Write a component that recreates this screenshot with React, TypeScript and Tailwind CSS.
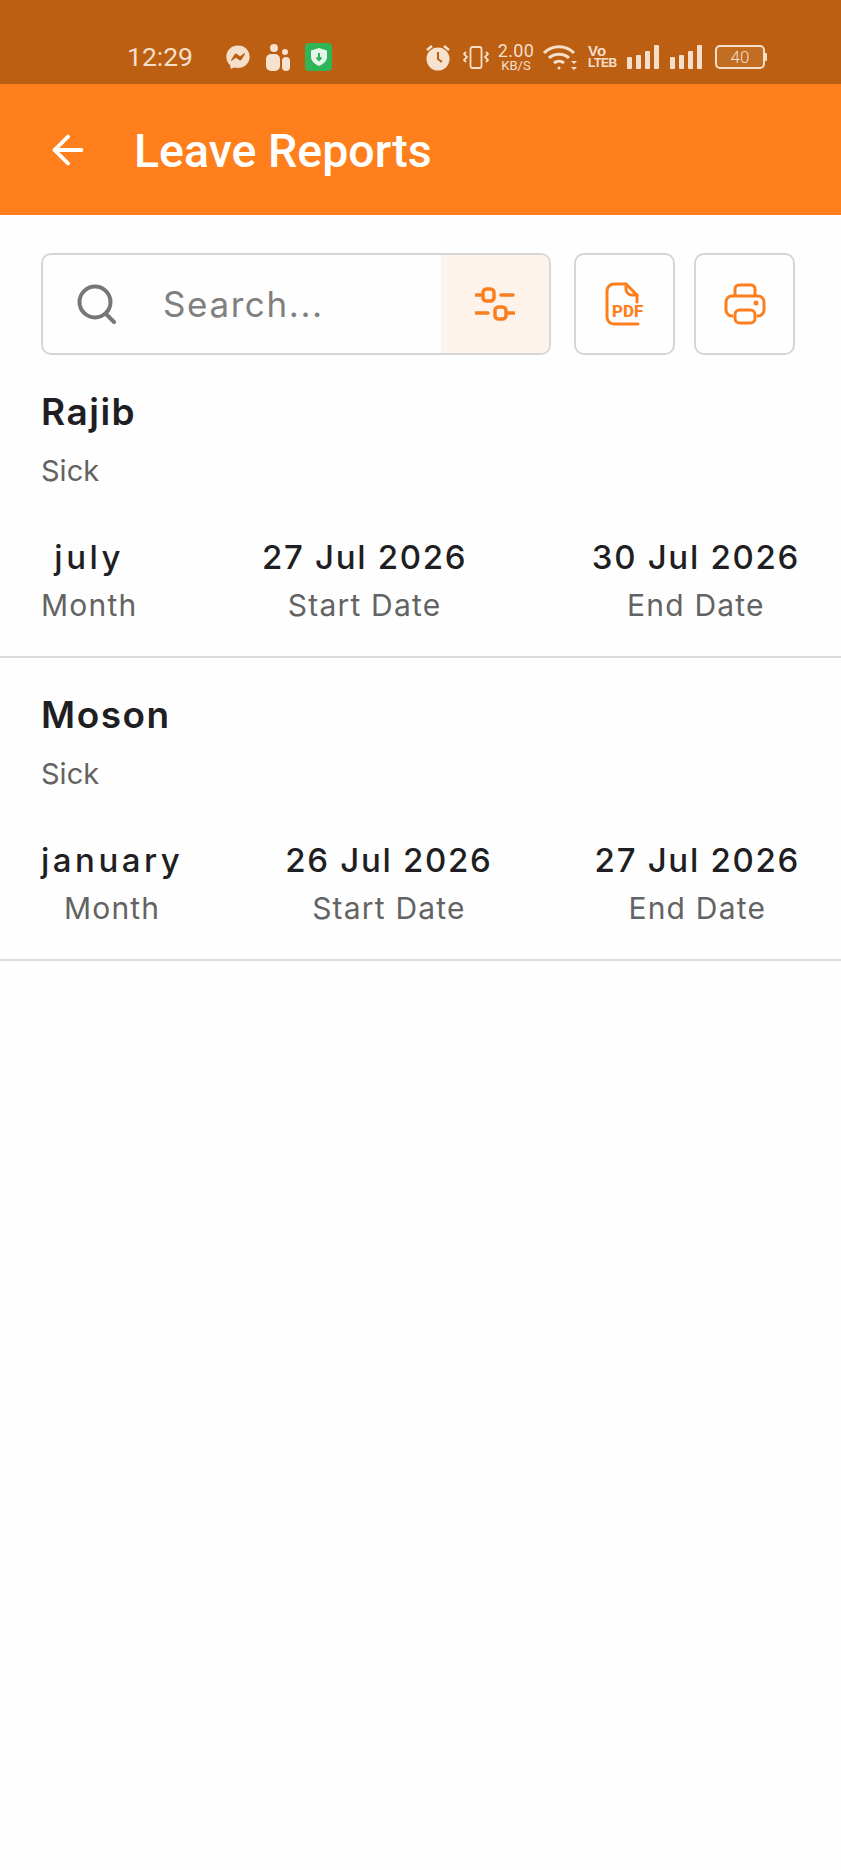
import { ArrowLeft } from "lucide-react";
import { FaFacebookMessenger } from "react-icons/fa";

const reports = [
  { name: "Rajib", type: "Sick", month: "july", start: "27 Jul 2026", end: "30 Jul 2026" },
  { name: "Moson", type: "Sick", month: "january", start: "26 Jul 2026", end: "27 Jul 2026" },
];

function Signal() {
  return (
    <div className="flex items-end gap-[4px] h-[24px]">
      <div className="w-[5px] h-[12px] bg-[#f5dfcb] rounded-[1px]" />
      <div className="w-[5px] h-[14px] bg-[#f5dfcb] rounded-[1px]" />
      <div className="w-[5px] h-[18px] bg-[#f5dfcb] rounded-[1px]" />
      <div className="w-[5px] h-[24px] bg-[#f5dfcb] rounded-[1px]" />
    </div>
  );
}

function StatusBar() {
  return (
    <div className="h-[84px] bg-[#bc5f12] flex items-center pt-[30px] pl-[127px] pr-[74px] text-[#f5dfcb] font-['Roboto',sans-serif]">
      <span className="text-[26.500px] leading-none w-[65px] pt-[1px]">12:29</span>
      <FaFacebookMessenger className="ml-[34px] w-[24px] h-[24px]" />
      {/* people icon */}
      <svg className="ml-[16px]" width="24" height="27" viewBox="0 0 24 27" fill="#f7e2d0">
        <circle cx="8" cy="4" r="4" />
        <circle cx="19" cy="8" r="3" />
        <rect x="0" y="10" width="14" height="17" rx="5" />
        <rect x="16" y="13" width="8" height="14" rx="4" />
      </svg>
      {/* green shield */}
      <div className="ml-[15px] w-[27px] h-[28px] bg-[#2fb457] rounded-[4px] flex items-center justify-center">
        <svg width="16" height="18" viewBox="0 0 16 18">
          <path d="M8 0l8 2.5v6.5c0 4-3.5 7-8 9-4.500-2-8-5-8-9V2.500z" fill="#e6f6ea" />
          <path d="M8 5v7M5.500 9.500L8 12l2.500-2.500" stroke="#2fb457" strokeWidth="2" fill="none" />
        </svg>
      </div>

      <div className="ml-auto flex items-center">
        {/* alarm */}
        <svg width="24" height="27" viewBox="0 0 24 27" fill="none">
          <circle cx="12" cy="15" r="11.500" fill="#f7e2d0" />
          <path d="M12 8v7l4 3" stroke="#bc5f12" strokeWidth="2" />
          <path d="M1 6l5-4M23 6l-5-4" stroke="#f7e2d0" strokeWidth="2.500" />
        </svg>
        {/* vibrate */}
        <svg className="ml-[13px]" width="26" height="23" viewBox="0 0 26 23" fill="none" stroke="#f5dfcb" strokeWidth="1.800">
          <rect x="7.500" y="1" width="11" height="21" rx="2" />
          <path d="M3 6l-2 2 3 3-3 3 2 2M23 6l2 2-3 3 3 3-2 2" />
        </svg>
        <div className="ml-[7px] w-[40px] flex flex-col items-center leading-none">
          <span className="text-[18px] leading-[15px] tracking-[0.3px]">2.00</span>
          <span className="text-[13px] leading-[11px] mt-[2px]">KB/S</span>
        </div>
        {/* wifi */}
        <svg className="ml-[7px]" width="34" height="26" viewBox="0 0 34 26" fill="none" stroke="#f5dfcb" strokeWidth="3">
          <path d="M1 9c8-8.500 22-8.500 30 0" />
          <path d="M6 14c5.500-5 14.500-5 20 0" />
          <path d="M11 19c3-2.500 7-2.500 10 0" />
          <circle cx="16" cy="24" r="1.500" fill="#f5dfcb" stroke="none" />
          <path d="M28 17l3 3 3-3zM28 23l3 3 3-3z" fill="#f5dfcb" stroke="none" />
        </svg>
        <div className="ml-[11px] w-[27px] flex flex-col items-start font-['Liberation_Sans',sans-serif] font-bold leading-none">
          <span className="text-[15px] leading-[12px]">Vo</span>
          <span className="text-[12px] leading-[11px] mt-[1px] tracking-[-0.4px]">LTEB</span>
        </div>
        <div className="ml-[12px]">
          <Signal />
        </div>
        <div className="ml-[11px]">
          <Signal />
        </div>
        <div className="ml-[13px] flex items-center">
          <div className="w-[50px] h-[24px] border-2 border-[#f5dfcb] rounded-[5px] flex items-center justify-center text-[17px] font-light leading-none bg-[#c9843f]/40">
            40
          </div>
          <div className="w-[2px] h-[8px] bg-[#f5dfcb] rounded-r-[1px]" />
        </div>
      </div>
    </div>
  );
}

function IconButton({ children }: { children: React.ReactNode }) {
  return (
    <div className="w-[101px] h-[102px] flex items-center justify-center border-2 border-[#d6d6d6] rounded-[10px]">
      {children}
    </div>
  );
}

function Stat({ value, label, wide }: { value: string; label: string; wide?: boolean }) {
  return (
    <div className="flex flex-col items-center">
      <span className={`text-[33px] leading-[48px] font-medium text-[#1f1f23] ${wide ? "tracking-[3.5px]" : "tracking-[1.7px]"}`}>
        {value}
      </span>
      <span className="text-[30px] leading-[48px] tracking-[1.2px] text-[#636363]">{label}</span>
    </div>
  );
}

export default function App() {
  return (
    <div className="min-h-[1870px] bg-[#fefefe] font-['Inter',sans-serif]">
      <StatusBar />
      <div className="h-[131px] bg-[#fe7f1b] flex items-center pl-[45px] text-white">
        <ArrowLeft className="w-[46px] h-[46px]" strokeWidth={2} />
        <span className="ml-[43px] pt-[4px] text-[46.500px] font-medium font-['Roboto',sans-serif] leading-none">Leave Reports</span>
      </div>

      <div className="flex items-center pt-[38px] pl-[41px]">
        <div className="w-[510px] h-[102px] flex border-2 border-[#d6d6d6] rounded-[10px] overflow-hidden">
          <div className="flex-1 flex items-center pl-[34px]">
            <svg width="40" height="40" viewBox="0 0 40 40" fill="none" stroke="#777777" strokeWidth="4" strokeLinecap="round">
              <circle cx="18" cy="18" r="15.500" />
              <path d="M29 30l8 8" />
            </svg>
            <span className="ml-[46px] text-[35px] tracking-[1.6px] text-[#808080] leading-none">Search...</span>
          </div>
          <div className="w-[108px] bg-[#fdf3ea] flex items-center justify-center">
            <svg width="40" height="36" viewBox="0 0 40 36" fill="none" stroke="#fd7e1c" strokeWidth="3.500" strokeLinecap="round">
              <path d="M1 9h6M26 9h12M1 27h12M32 27h7" />
              <rect x="8" y="3" width="11" height="12" rx="3.500" />
              <rect x="20" y="21" width="11" height="12" rx="3.500" />
            </svg>
          </div>
        </div>
        <div className="ml-[23px]">
          <IconButton>
            <svg width="40" height="44" viewBox="0 0 40 44" fill="none" stroke="#fd7e1c" strokeWidth="3" strokeLinecap="round" strokeLinejoin="round">
              <path d="M32 20v-7L21 2H9a7 7 0 0 0-7 7v26a7 7 0 0 0 7 7h24" />
              <path d="M21 2v5a6 6 0 0 0 6 6h5" />
              <text x="7" y="35" fontSize="17" fontWeight="800" fill="#fd7e1c" stroke="none" fontFamily="Roboto, sans-serif">PDF</text>
            </svg>
          </IconButton>
        </div>
        <div className="ml-[19px]">
          <IconButton>
            <svg width="42" height="42" viewBox="0 0 42 42" fill="none" stroke="#fd7e1c" strokeWidth="3" strokeLinejoin="round">
              <path d="M11 13V6a4 4 0 0 1 4-4h12a4 4 0 0 1 4 4v7" />
              <path d="M9 33H8a6 6 0 0 1-6-6v-8a6 6 0 0 1 6-6h26a6 6 0 0 1 6 6v8a6 6 0 0 1-6 6h-1" />
              <rect x="11" y="27" width="20" height="13" rx="4.500" />
              <circle cx="32" cy="20" r="1" fill="#fd7e1c" />
            </svg>
          </IconButton>
        </div>
      </div>

      {reports.map((r) => (
        <div key={r.name} className="border-b-2 border-[#dcdcdc] pl-[41px] pr-[41px] pt-[30px] pb-[27px] first:pt-[26px]">
          <div className="text-[37px] leading-[54px] font-semibold tracking-[1.5px] text-[#1f1f23]">{r.name}</div>
          <div className="text-[29px] leading-[44px] mt-[10px] text-[#636363]">{r.type}</div>
          <div className="mt-[40px] flex justify-between">
            <Stat value={r.month} label="Month" wide />
            <Stat value={r.start} label="Start Date" />
            <Stat value={r.end} label="End Date" />
          </div>
        </div>
      ))}
    </div>
  );
}
